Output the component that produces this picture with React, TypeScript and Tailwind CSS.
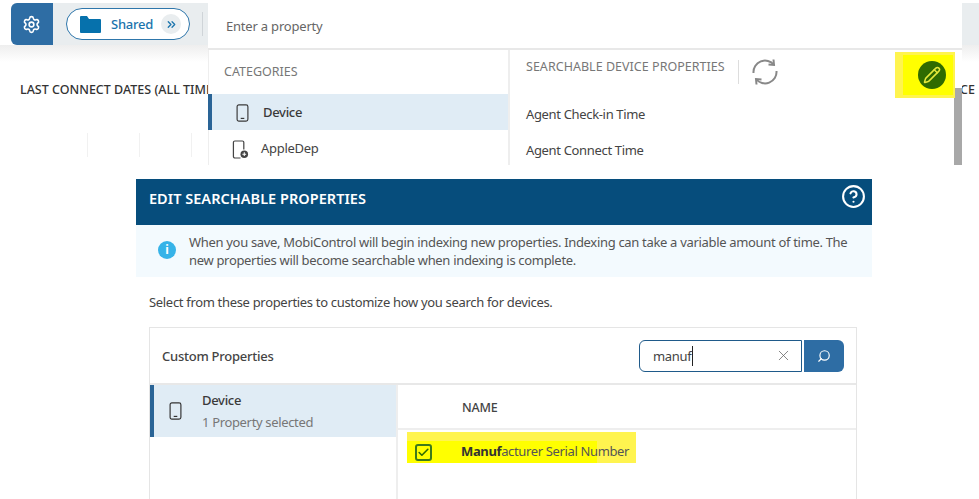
import { Settings, X, Search, Pencil, Check, ChevronsRight, CircleHelp } from "lucide-react";

function Phone({ className }: { className: string }) {
  return (
    <svg viewBox="0 0 14 20" fill="none" stroke="currentColor" strokeWidth="1.3" className={className}>
      <rect x="1" y="1" width="12" height="18" rx="2" />
      <path d="M5 16h4" />
    </svg>
  );
}

function PhoneAdd({ className }: { className: string }) {
  return (
    <svg viewBox="0 0 18 20" fill="none" className={className}>
      <path d="M9 19H3a1.5 1.5 0 0 1-1.5-1.5v-15A1.5 1.5 0 0 1 3 1h8a1.5 1.5 0 0 1 1.5 1.5V10" stroke="currentColor" strokeWidth="1.3" />
      <circle cx="13" cy="15" r="4" fill="currentColor" />
      <path d="M11 15h4M13 13v4" stroke="#fff" strokeWidth="1.1" />
    </svg>
  );
}

function FolderSolid({ className }: { className: string }) {
  return (
    <svg viewBox="0 0 21 17" className={className} fill="currentColor">
      <path d="M0 1a1 1 0 0 1 1-1h6l2 3h11a1 1 0 0 1 1 1v12a1 1 0 0 1-1 1H1a1 1 0 0 1-1-1z" />
    </svg>
  );
}

function Refresh({ className }: { className: string }) {
  return (
    <svg viewBox="0 0 28 28" fill="none" stroke="currentColor" strokeWidth="2" className={className}>
      <path d="M2.5 15A11.5 11.5 0 0 1 23 7" />
      <path d="M22.5 1.5L23 7l-5.5-.5" />
      <path d="M25.5 13A11.5 11.5 0 0 1 5 21" />
      <path d="M5.5 26.5L5 21l5.5.5" />
    </svg>
  );
}

export default function App() {
  return (
    <div className="h-[499px] w-[979px] overflow-hidden bg-white font-['Noto_Sans',sans-serif] text-[#444]">
      <section className="relative h-[165px] pt-[3px]">
        <div className="ml-[11px] flex h-[42px] items-center rounded-l-md bg-[#e9edef]">
          <div className="flex h-full w-[42px] items-center justify-center rounded-l-md bg-[#2e6da4] pr-[2px] text-white">
            <Settings size={19} strokeWidth={2} />
          </div>
          <div className="ml-[13px] flex h-[32px] w-[124px] items-center rounded-full border border-[#2e76ab] bg-white pl-[13px]">
            <FolderSolid className="h-[17px] w-[21px] text-[#0671ac]" />
            <span className="ml-[10px] pt-[2px] text-[13px] font-medium tracking-[-0.25px] text-[#1b74ad]">Shared</span>
            <span className="ml-[8px] flex h-[20px] w-[20px] items-center justify-center rounded-full bg-[#e9edef] text-[#1b74ad]">
              <ChevronsRight size={13} strokeWidth={2.4} />
            </span>
          </div>
          <div className="ml-[12px] h-[24px] w-px bg-[#cfd4d8]" />
        </div>
        <div className="h-[17px] bg-gradient-to-b from-[#eeeeee] to-white" />
        <h2 className="ml-[20px] mt-[19px] whitespace-nowrap text-[12.5px] font-medium text-[#333]">LAST CONNECT DATES (ALL TIME)</h2>
        <div className="ml-[87px] mt-[33px] flex h-[24px]">
          <div className="w-[52px] border-l border-[#f1f1f1]" />
          <div className="w-[52px] border-l border-[#f1f1f1]" />
          <div className="w-[52px] border-l border-[#f1f1f1]" />
        </div>
        <span className="absolute left-[960px] top-[81px] text-[12.5px] font-medium text-[#333]">CE</span>

        <div className="absolute left-[208px] top-[3px] flex h-[162px] w-[754px] flex-col overflow-hidden bg-white">
          <div className="flex h-[47px] shrink-0 items-center border-b-2 border-[#e8e8e8] pl-[18px] pt-[2px] text-[13px] tracking-[-0.2px] text-[#666]">Enter a property</div>
          <div className="flex min-h-0 flex-1">
            <div className="w-[302px] shrink-0 border-r-2 border-l border-[#eeeeee]">
              <div className="flex h-[44px] items-center pl-[15px] text-[12.5px] text-[#777]">CATEGORIES</div>
              <div className="-ml-px flex h-[36px] items-center border-l-4 border-[#2a6496] bg-[#e0ecf5] pl-[24px] pt-[1px] text-[#3a3a3a]">
                <Phone className="h-[18px] w-[13px]" />
                <span className="ml-[14px] text-[13px] font-medium tracking-[-0.3px]">Device</span>
              </div>
              <div className="flex h-[36px] items-center pl-[23px] pt-[2px] text-[#444]">
                <PhoneAdd className="h-[19px] w-[17px]" />
                <span className="ml-[12px] text-[13px] tracking-[-0.3px]">AppleDep</span>
              </div>
            </div>
            <div className="flex min-w-0 flex-1 flex-col pl-[16px]">
              <div className="flex h-[47px] shrink-0 items-start pt-[8px]">
                <span className="mt-[0px] text-[12.5px] tracking-[0.03px] text-[#777]">SEARCHABLE DEVICE PROPERTIES</span>
                <div className="ml-[13px] mt-[2px] h-[24px] w-px bg-[#dddddd]" />
                <Refresh className="ml-[12px] mt-[0px] h-[28px] w-[28px] text-[#888]" />
              </div>
              <div className="flex h-[36px] shrink-0 items-center text-[13px] tracking-[-0.34px] text-[#444]">Agent Check-in Time</div>
              <div className="flex h-[36px] shrink-0 items-center text-[13px] tracking-[-0.34px] text-[#444]">Agent Connect Time</div>
            </div>
          </div>
          <div className="absolute bottom-0 right-0 h-[77px] w-[8px] bg-[#a8a8a8]" />
          <div className="absolute left-[687px] top-[49px] flex h-[46px] w-[60px] items-center justify-center bg-[#fff44f]">
            <div className="absolute left-[8px] top-[3px] h-[40px] w-[50px] bg-[#ffff00]" />
            <div className="relative ml-[14px] flex h-[28px] w-[28px] items-center justify-center rounded-full bg-[#2f6b00] text-[#e4e83a]">
              <Pencil size={18} strokeWidth={2} />
            </div>
          </div>
        </div>
      </section>

      <section className="ml-[136px] mt-[14px] w-[736px]">
        <header className="flex h-[46px] items-start justify-between bg-[#064d7c] pl-[13px] pr-[6px] text-white">
          <h1 className="mt-[9px] text-[14.5px] font-semibold tracking-[0.03px]">EDIT SEARCHABLE PROPERTIES</h1>
          <CircleHelp size={25} strokeWidth={2} className="mt-[5px]" />
        </header>
        <div className="flex h-[52px] bg-[#f3fafe] pl-[22px] pt-[8px]">
          <div className="mt-[8px] flex h-[18px] w-[18px] shrink-0 items-center justify-center rounded-full bg-[#36b3e8] text-white">
            <span className="text-[12px] font-bold leading-none">i</span>
          </div>
          <p className="ml-[13px] w-[670px] text-[13px] leading-[18px] tracking-[-0.32px] text-[#555]">
            When you save, MobiControl will begin indexing new properties. Indexing can take a variable amount of time. The new properties will become searchable when indexing is complete.
          </p>
        </div>
        <p className="ml-[13px] mt-[16px] text-[13px] leading-[18px] tracking-[-0.32px] text-[#444]">Select from these properties to customize how you search for devices.</p>
        <div className="ml-[13px] mt-[16px] h-[172px] w-[708px] border border-b-0 border-[#e5e5e5]">
          <div className="flex h-[57px] items-center justify-between border-b-2 border-[#e8e8e8] pl-[12px] pr-[12px]">
            <span className="pt-[2px] text-[13px] font-medium tracking-[-0.25px] text-[#444]">Custom Properties</span>
            <div className="flex items-center gap-[2px]">
              <div className="flex h-[32px] w-[163px] items-center justify-between rounded-l-md border border-[#1f5a8a] pl-[13px] pr-[9px]">
                <span className="border-r border-[#222] text-[13px] leading-[20px] tracking-[-0.3px] text-[#444]">manuf</span>
                <X size={17} strokeWidth={1.1} className="text-[#666]" />
              </div>
              <div className="flex h-[32px] w-[40px] items-center justify-center rounded-r-md bg-[#2e6da4] text-white">
                <Search size={14} strokeWidth={2} className="-scale-x-100" />
              </div>
            </div>
          </div>
          <div className="flex h-[114px]">
            <div className="w-[248px] shrink-0 border-r-2 border-[#eeeeee]">
              <div className="flex h-[52px] border-l-4 border-[#2a6496] bg-[#e0ecf5]">
                <Phone className="ml-[15px] mt-[17px] h-[18px] w-[13px] text-[#333]" />
                <div className="ml-[20px] mt-[5px]">
                  <div className="text-[13px] font-medium leading-[20px] tracking-[-0.3px] text-[#3a3a3a]">Device</div>
                  <div className="mt-[2px] text-[13px] leading-[20px] tracking-[-0.34px] text-[#777]">1 Property selected</div>
                </div>
              </div>
            </div>
            <div className="min-w-0 flex-1">
              <div className="flex h-[45px] items-center border-b-2 border-[#eeeeee] pl-[64px] pt-[3px] text-[12.5px] font-medium tracking-[-0.2px] text-[#444]">NAME</div>
              <div className="relative ml-[9px] mt-[2px] flex h-[31px] w-[229px] items-center bg-[#fff44f] pl-[8px] pt-[9px]">
                <div className="absolute left-0 top-[9px] h-[22px] w-[190px] bg-[#ffff00]" />
                <div className="relative flex h-[17px] w-[17px] items-center justify-center rounded-[3px] border-2 border-[#3d7a1c] text-[#2f6b00]">
                  <Check size={13} strokeWidth={3} />
                </div>
                <span className="relative ml-[29px] whitespace-nowrap text-[13px] tracking-[-0.36px] text-[#555]"><b className="font-bold text-[#333]">Manuf</b>acturer Serial Number</span>
              </div>
            </div>
          </div>
        </div>
      </section>
    </div>
  );
}
